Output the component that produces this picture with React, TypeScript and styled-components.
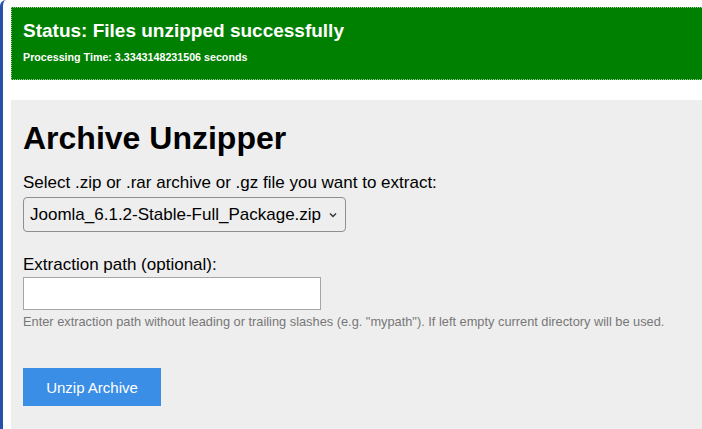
import React from "react";
import styled, { createGlobalStyle } from "styled-components";

const Global = createGlobalStyle`
  html, body { margin: 0; padding: 0; background: #fff; overflow: hidden; }
  body { font-family: "Liberation Sans", Arial, sans-serif; }
`;

const Frame = styled.div`
  min-height: 429px;
  border-left: 3px solid #2552a8;
  border-top-left-radius: 6px;
  padding: 7px 0 0 8px;
  box-sizing: border-box;
  display: flex;
  flex-direction: column;
  gap: 20px;
`;

const StatusBox = styled.div`
  background: #008000;
  border: 1px dotted #9ccc9c;
  border-right: none;
  color: #fff;
  padding: 11px 11px 0;
  height: 73px;
  box-sizing: border-box;
`;

const StatusTitle = styled.h2`
  margin: 0;
  font-size: 19px;
  font-weight: bold;
  line-height: 24px;
`;

const StatusTime = styled.p`
  margin: 7px 0 0;
  font-size: 10.7px;
  font-weight: bold;
  line-height: 14px;
`;

const Panel = styled.div`
  background: #eeeeee;
  flex: 1;
  padding: 18px 12px 24px;
`;

const Title = styled.h1`
  margin: 0 0 15px;
  font-size: 32px;
  line-height: 40px;
  font-weight: bold;
  color: #000;
`;

const Field = styled.div<{ $gap?: number }>`
  display: flex;
  flex-direction: column;
  align-items: flex-start;
  margin-bottom: ${(p) => p.$gap ?? 0}px;
`;

const Label = styled.label<{ $space?: number }>`
  font-size: 17px;
  line-height: 20px;
  color: #000;
  margin-bottom: ${(p) => p.$space ?? 4}px;
`;

const SelectBox = styled.div`
  display: flex;
  align-items: center;
  gap: 7px;
  height: 35px;
  box-sizing: border-box;
  padding: 0 7px 0 6px;
  border: 1px solid #8f8f8f;
  border-radius: 4px;
  background: #eeeeee;
  font-size: 17px;
  color: #000;
`;

const Chevron = styled.svg`
  width: 10px;
  height: 10px;
`;

const TextInput = styled.input`
  width: 298px;
  height: 33px;
  box-sizing: border-box;
  border: 1px solid #a6a6a6;
  background: #fff;
  margin: 0;
`;

const Help = styled.small`
  font-size: 12.8px;
  line-height: 16px;
  color: #777;
  margin-top: 4px;
`;

const Button = styled.button`
  width: 138px;
  height: 38px;
  border: none;
  background: #3a8ee6;
  color: #fff;
  font-family: "Liberation Sans", Arial, sans-serif;
  font-size: 15px;
  padding: 0;
`;

export default function App() {
  return (
    <>
      <Global />
      <Frame>
        <StatusBox>
          <StatusTitle>Status: Files unzipped successfully</StatusTitle>
          <StatusTime>Processing Time: 3.3343148231506 seconds</StatusTime>
        </StatusBox>
        <Panel>
          <Title>Archive Unzipper</Title>
          <Field $gap={23}>
            <Label>Select .zip or .rar archive or .gz file you want to extract:</Label>
            <SelectBox>
              <span>Joomla_6.1.2-Stable-Full_Package.zip</span>
              <Chevron viewBox="0 0 10 10">
                <path d="M2 3.5 L5 6.5 L8 3.5" fill="none" stroke="#333" strokeWidth="1.4" />
              </Chevron>
            </SelectBox>
          </Field>
          <Field $gap={38}>
            <Label $space={2}>Extraction path (optional):</Label>
            <TextInput type="text" />
            <Help>Enter extraction path without leading or trailing slashes (e.g. "mypath"). If left empty current directory will be used.</Help>
          </Field>
          <Button>Unzip Archive</Button>
        </Panel>
      </Frame>
    </>
  );
}
